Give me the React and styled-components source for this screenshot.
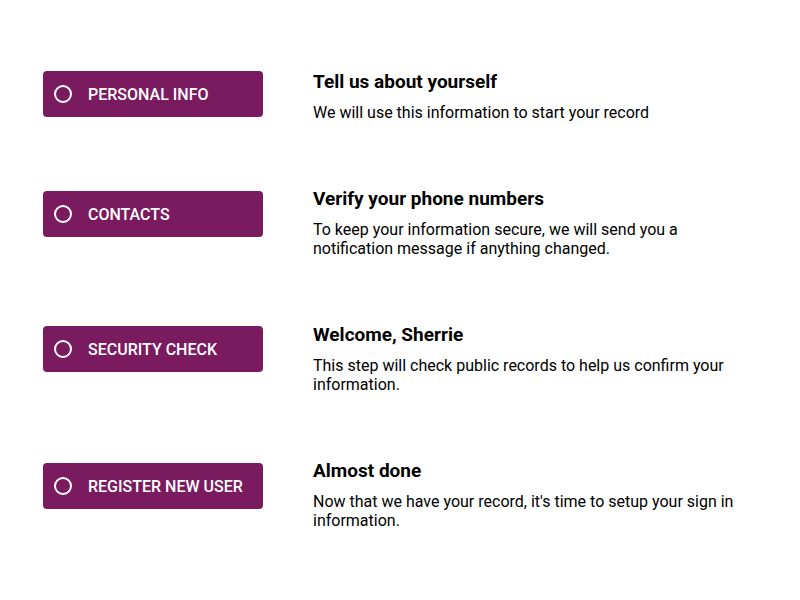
import React from 'react'
import styled, { createGlobalStyle } from 'styled-components'

const GlobalStyle = createGlobalStyle`
  body {
    margin: 0;
    background: #ffffff;
    font-family: Roboto, 'Liberation Sans', sans-serif;
    color: #000000;
  }
`

const Page = styled.div`
  width: 800px;
  height: 600px;
  box-sizing: border-box;
  padding: 71px 0 0 43px;
`

const Row = styled.div`
  display: grid;
  grid-template-columns: 220px 430px;
  column-gap: 50px;
  align-items: start;
  height: ${p => p.$height}px;
`

const StepButton = styled.button`
  display: flex;
  align-items: center;
  gap: 16px;
  width: 220px;
  height: 46px;
  padding: 0 0 0 11px;
  border: none;
  border-radius: 4px;
  background-color: #7a1b5f;
  color: #ffffff;
  font-family: Roboto, 'Liberation Sans', sans-serif;
  font-size: 16px;
  font-weight: 500;
  text-transform: uppercase;
  text-align: left;
  cursor: pointer;
`

const Ring = styled.span`
  width: 18px;
  height: 18px;
  box-sizing: border-box;
  border: 2px solid #ffffff;
  border-radius: 50%;
  flex-shrink: 0;
`

const Info = styled.div`
  margin-top: ${p => p.$shift}px;
`

const Title = styled.h3`
  margin: 0 0 9px;
  font-size: 19px;
  line-height: 24px;
  font-weight: 700;
`

const Text = styled.p`
  margin: 0;
  font-size: 16px;
  line-height: 19px;
  font-weight: 400;
`

const steps = [
  {
    label: 'Personal info',
    title: 'Tell us about yourself',
    text: 'We will use this information to start your record',
    height: 120,
    shift: -1
  },
  {
    label: 'Contacts',
    title: 'Verify your phone numbers',
    text: 'To keep your information secure, we will send you a notification message if anything changed.',
    height: 135,
    shift: -4
  },
  {
    label: 'Security check',
    title: 'Welcome, Sherrie',
    text: 'This step will check public records to help us confirm your information.',
    height: 137,
    shift: -3
  },
  {
    label: 'Register new user',
    title: 'Almost done',
    text: "Now that we have your record, it's time to setup your sign in information.",
    height: 80,
    shift: -4
  }
]

const App = () => {
  return (
    <Page>
      <GlobalStyle />
      {steps.map(s => (
        <Row key={s.label} $height={s.height}>
          <StepButton>
            <Ring />
            {s.label}
          </StepButton>
          <Info $shift={s.shift}>
            <Title>{s.title}</Title>
            <Text>{s.text}</Text>
          </Info>
        </Row>
      ))}
    </Page>
  )
}

export default App
